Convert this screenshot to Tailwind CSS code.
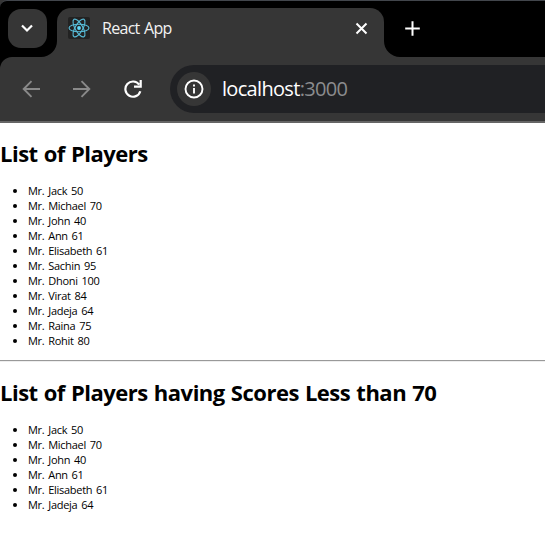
<!DOCTYPE html>
<html lang="en">
<head>
<meta charset="utf-8">
<title>React App</title>
<script src="https://cdn.jsdelivr.net/npm/@tailwindcss/browser@4"></script>
</head>
<body class="w-[545px] h-[542px] overflow-hidden bg-white text-black font-['Open_Sans','Noto_Sans',sans-serif]">
<header class="h-[123px] bg-[#363636] border-b-2 border-[#656565]">
  <div class="relative h-[57px] bg-black border-t border-[#42464c] flex rounded-tl-[7px]">
    <button class="ml-2 mt-2 size-[39px] shrink-0 rounded-[13px] bg-[#363636] flex items-center justify-center" aria-label="Search tabs">
      <svg class="-mt-px mr-px size-[14px]" viewBox="0 0 14 14" fill="none" stroke="#fff" stroke-width="2.2"><path d="M2 4.5 7 9.5 12 4.5"/></svg>
    </button>
    <div class="relative ml-[10px] mt-[7px] h-[49px] w-[327px] shrink-0 rounded-t-[14px] bg-[#363636] flex items-center">
      <svg class="absolute -left-4 bottom-0 size-4" viewBox="0 0 16 16" fill="#363636"><path d="M16 0V16H0A16 16 0 0 0 16 0Z"/></svg>
      <svg class="absolute -right-4 bottom-0 size-4" viewBox="0 0 16 16" fill="#363636"><path d="M0 0V16H16A16 16 0 0 1 0 0Z"/></svg>
      <span class="ml-[11px] -mt-[9px] size-[22px] rounded-[2px] bg-[#222] flex items-center justify-center">
        <svg class="size-[22px]" viewBox="0 0 22 22" fill="none" stroke="#58bcd8" stroke-width="1.1"><ellipse cx="11" cy="11" rx="10" ry="3.8"/><ellipse cx="11" cy="11" rx="10" ry="3.8" transform="rotate(60 11 11)"/><ellipse cx="11" cy="11" rx="10" ry="3.8" transform="rotate(120 11 11)"/><circle cx="11" cy="11" r="1.9" fill="#61dafb" stroke="none"/></svg>
      </span>
      <span class="ml-3 -mt-[9px] text-[16px] leading-5 tracking-[-0.7px] [word-spacing:1px] text-[#f2f2f2] whitespace-nowrap">React App</span>
      <svg class="ml-auto mr-4 -mt-[9px] size-[13px]" viewBox="0 0 13 13" stroke="#fff" stroke-width="2"><path d="M1.5 1.5 11.5 11.5M11.5 1.5 1.5 11.5"/></svg>
    </div>
    <svg class="ml-[21px] mt-5 size-[15px] shrink-0" viewBox="0 0 15 15" stroke="#fff" stroke-width="2"><path d="M7.5 .2V14.8M.2 7.5H14.8"/></svg>
    <svg class="absolute left-0 bottom-[-12px] size-3" viewBox="0 0 12 12"><path d="M0 0H12A12 12 0 0 0 0 12Z"/></svg>
  </div>
  <div class="h-16 flex items-center">
    <svg class="ml-[22px] size-[18px] shrink-0" viewBox="0 0 18 18" fill="none" stroke="#8a8a8a" stroke-width="1.9"><path d="M18 9H2M9.5 1.2 1.7 9 9.5 16.8"/></svg>
    <svg class="ml-[33px] size-[18px] shrink-0" viewBox="0 0 18 18" fill="none" stroke="#8a8a8a" stroke-width="1.9"><path d="M0 9H16M8.5 1.2 16.3 9 8.5 16.8"/></svg>
    <svg class="ml-[33px] size-[18px] shrink-0" viewBox="0 0 18 18" fill="none" stroke="#fff" stroke-width="2.2"><path d="M15.2 4.7A7.6 7.6 0 1 0 16.3 11.2M16.7 0V6.7H10"/></svg>
    <div class="ml-7 h-12 flex-1 rounded-l-full bg-[#202124] flex items-center">
      <span class="ml-[7px] size-[34px] rounded-full bg-[#363636] flex items-center justify-center">
        <svg class="size-5" viewBox="0 0 20 20" fill="none" stroke="#fff" stroke-width="1.9"><circle cx="10" cy="10" r="8.5"/><path d="M10 9V14.5M10 5.5V7.5"/></svg>
      </span>
      <span class="ml-[11px] -mt-px text-[20px] leading-6 tracking-[-0.68px] text-white whitespace-nowrap">localhost<span class="text-[#8b8c8e]">:3000</span></span>
    </div>
  </div>
</header>
<main>
  <h1 class="pt-[14px] text-[22px] leading-8 font-bold tracking-[-0.5px] [word-spacing:0.9px] whitespace-nowrap">List of Players</h1>
  <ul class="mt-[14px] pl-7 list-disc text-[11px] leading-[15px] tracking-[-0.28px] [word-spacing:1.2px]">
    <li>Mr. Jack 50</li><li>Mr. Michael 70</li><li>Mr. John 40</li><li>Mr. Ann 61</li><li>Mr. Elisabeth 61</li><li>Mr. Sachin 95</li><li>Mr. Dhoni 100</li><li>Mr. Virat 84</li><li>Mr. Jadeja 64</li><li>Mr. Raina 75</li><li>Mr. Rohit 80</li>
  </ul>
  <hr class="mt-3 h-[2px] border-t border-b border-t-[#999] border-b-[#eee]">
  <h1 class="pt-[14px] text-[22px] leading-8 font-bold tracking-[-0.5px] [word-spacing:0.9px] whitespace-nowrap">List of Players having Scores Less than 70</h1>
  <ul class="mt-[14px] pl-7 list-disc text-[11px] leading-[15px] tracking-[-0.28px] [word-spacing:1.2px]">
    <li>Mr. Jack 50</li><li>Mr. Michael 70</li><li>Mr. John 40</li><li>Mr. Ann 61</li><li>Mr. Elisabeth 61</li><li>Mr. Jadeja 64</li>
  </ul>
</main>
</body>
</html>
